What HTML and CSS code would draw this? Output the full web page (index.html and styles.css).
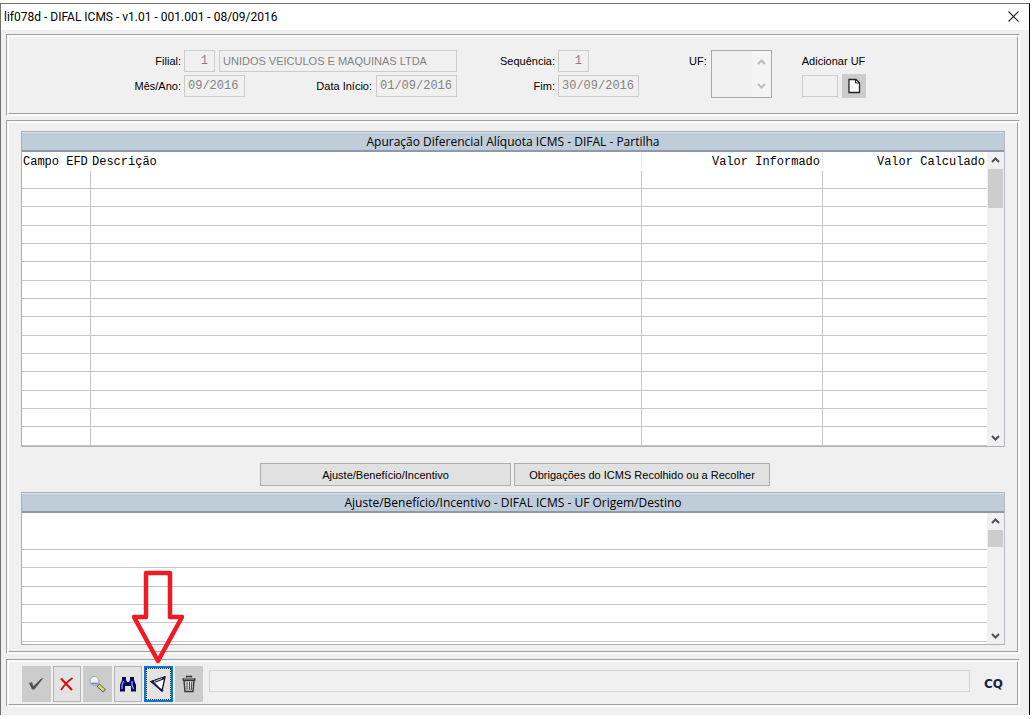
FILE: index.html
```html
<!DOCTYPE html>
<html lang="pt-BR">
<head>
<meta charset="utf-8">
<title>lif078d - DIFAL ICMS</title>
<link rel="stylesheet" href="styles.css">
</head>
<body>
<main class="window">
  <header class="titlebar">
    <h1>lif078d - DIFAL ICMS - v1.01 - 001.001 - 08/09/2016</h1>
    <button class="close" aria-label="Fechar"><svg width="11" height="11" viewBox="0 0 11 11"><path d="M.5.5l10 10M10.5.5l-10 10" stroke="#222" stroke-width="1.1"/></svg></button>
  </header>

  <section class="panel"><div class="inner filters">
    <div class="fields">
      <label for="filial">Filial:</label>
      <div class="pair"><input id="filial" class="code" value="1" disabled><input class="name" aria-label="Nome da filial" value="UNIDOS VEICULOS E MAQUINAS LTDA" disabled></div>
      <label for="seq">Sequência:</label>
      <input id="seq" class="code" value="1" disabled>
      <label for="mes">Mês/Ano:</label>
      <div class="pair spread"><input id="mes" class="month" value="09/2016" disabled><span class="pair"><label for="ini">Data Início:</label><input id="ini" class="date" value="01/09/2016" disabled></span></div>
      <label for="fim">Fim:</label>
      <input id="fim" class="date" value="30/09/2016" disabled>
    </div>
    <div class="uf">
      <label for="uf">UF:</label>
      <div class="listbox">
        <select id="uf" size="2" disabled></select>
        <div class="arrows"><svg width="9" height="6" viewBox="0 0 9 6"><path d="M1 5l3.500-3.500L8 5"/></svg><svg width="9" height="6" viewBox="0 0 9 6"><path d="M1 1l3.500 3.500L8 1"/></svg></div>
      </div>
    </div>
    <div class="add">
      <label for="adduf">Adicionar UF</label>
      <div class="pair"><input id="adduf" class="short" disabled><button class="new" aria-label="Novo"><svg width="14" height="16" viewBox="0 0 14 16"><path d="M2 1.500h7l3.500 3.500v9.500H2z" fill="#fff" stroke="#222" stroke-width="1.300"/><path d="M8.500 1.500V5h4" fill="none" stroke="#222"/></svg></button></div>
    </div>
  </div></section>

  <section class="panel"><div class="inner work">
    <div class="grid">
      <h2>Apuração Diferencial Alíquota ICMS - DIFAL - Partilha</h2>
      <div class="gridbody">
        <table class="main">
          <colgroup><col class="c1"><col><col class="c3"><col class="c4"></colgroup>
          <thead><tr><th>Campo EFD</th><th>Descrição</th><th class="num">Valor Informado</th><th class="num">Valor Calculado</th></tr></thead>
          <tbody>
            <tr><td></td><td></td><td></td><td></td></tr><tr><td></td><td></td><td></td><td></td></tr><tr><td></td><td></td><td></td><td></td></tr>
            <tr><td></td><td></td><td></td><td></td></tr><tr><td></td><td></td><td></td><td></td></tr><tr><td></td><td></td><td></td><td></td></tr>
            <tr><td></td><td></td><td></td><td></td></tr><tr><td></td><td></td><td></td><td></td></tr><tr><td></td><td></td><td></td><td></td></tr>
            <tr><td></td><td></td><td></td><td></td></tr><tr><td></td><td></td><td></td><td></td></tr><tr><td></td><td></td><td></td><td></td></tr>
            <tr><td></td><td></td><td></td><td></td></tr><tr><td></td><td></td><td></td><td></td></tr><tr><td></td><td></td><td></td><td></td></tr>
          </tbody>
        </table>
        <div class="scroll"><svg width="9" height="6" viewBox="0 0 9 6"><path d="M1 5l3.500-3.500L8 5"/></svg><i class="thumb"></i><svg width="9" height="6" viewBox="0 0 9 6"><path d="M1 1l3.500 3.500L8 1"/></svg></div>
      </div>
    </div>
    <div class="tabs"><button class="tab">Ajuste/Benefício/Incentivo</button><button class="tab wide">Obrigações do ICMS Recolhido ou a Recolher</button></div>
    <div class="grid">
      <h2>Ajuste/Benefício/Incentivo - DIFAL ICMS - UF Origem/Destino</h2>
      <div class="gridbody">
        <div class="subwrap"><table class="sub"><tbody><tr><td></td></tr><tr><td></td></tr><tr><td></td></tr><tr><td></td></tr><tr><td></td></tr><tr><td></td></tr></tbody></table></div>
        <div class="scroll"><svg width="9" height="6" viewBox="0 0 9 6"><path d="M1 5l3.500-3.500L8 5"/></svg><i class="thumb small"></i><svg width="9" height="6" viewBox="0 0 9 6"><path d="M1 1l3.500 3.500L8 1"/></svg></div>
      </div>
    </div>
  </div></section>

  <section class="panel last"><div class="inner bar">
    <div class="tools">
      <button class="tool off" aria-label="Confirmar"><svg width="18" height="18" viewBox="0 0 18 18"><path d="M2 8l3-1 1.500 4L14 4l2.500-1L7.500 14.500H5z" fill="#606060"/><path d="M3 8.500l3 5 9-10" stroke="#444"/></svg></button>
      <button class="tool" aria-label="Cancelar"><svg width="18" height="18" viewBox="0 0 18 18"><path d="M3 3.500l11 11.500" stroke="#d91010" stroke-width="2.200"/><path d="M14.500 3C10 6 6 10.500 3 15" fill="none" stroke="#d91010" stroke-width="1.800"/></svg></button>
      <button class="tool off" aria-label="Pesquisar"><svg width="18" height="18" viewBox="0 0 18 18"><path d="M10 10l6.500 6" stroke="#555" stroke-width="4"/><path d="M10.500 10.500l5.500 5" stroke="#e0dc60" stroke-width="2.500"/><circle cx="6.500" cy="6" r="4.500" fill="#e8eef4" stroke="#999"/><path d="M3.500 5.500q1.500-3 5-2" stroke="#fff" stroke-width="2"/><path d="M3.500 8.500h6" stroke="#6080b0" stroke-width="1.500"/></svg></button>
      <button class="tool" aria-label="Localizar"><svg width="18" height="18" viewBox="0 0 18 18"><path d="M3 2.500h4V5l1 2h2l1-2V2.500h4V5l2 5v6h-5v-5H6v5H1v-6l2-5z" fill="#05056f"/><path d="M4.500 6L3 10v4M13 6v4l1.500 4" stroke="#c9cae8"/><path d="M3 2.500h4M11 2.500h4M1 16h5M12 16h5M7 8h4" stroke="#111"/></svg></button>
      <span class="slot">
        <button class="tool focus" aria-label="Filtrar"><svg width="18" height="18" viewBox="0 0 18 18"><path d="M2 6.500L16 2 13 16z" fill="#fff" stroke="#111" stroke-width="1.300"/><path d="M2.500 6.500L6 8l6 6 1 2z" fill="#0a0ab0"/><path d="M1 6.500L16 1v3L6.500 7.500 3 8z" fill="#182038"/><path d="M5 6.500l8-3" stroke="#bcc8d8"/><path d="M11 14l3 2" stroke="#0a0a70" stroke-width="2"/></svg></button>
        <svg class="pointer" width="52" height="96" viewBox="0 0 52 96"><path d="M14 3h24v44h12L26 91 2 47h12z" fill="none" stroke="#ed1c24" stroke-width="4.500" stroke-linejoin="round"/></svg>
      </span>
      <button class="tool off" aria-label="Excluir"><svg width="18" height="18" viewBox="0 0 18 18"><path d="M4 5.500h10l-1 11H5z" fill="#ddd" stroke="#333" stroke-width="1.400"/><path d="M7 7v8M9.500 7v8M11.800 7l-.5 8" stroke="#444"/><path d="M2.500 4.500h13" stroke="#333" stroke-width="2.500"/><path d="M4 4h10" stroke="#aaa"/><path d="M6.500 2.500V1.500h5v1" stroke="#333" stroke-width="1.300"/></svg></button>
    </div>
    <input class="status" aria-label="Mensagem" disabled>
    <span class="logo">CQ</span>
  </div></section>
</main>
</body>
</html>
```
FILE: styles.css
```css
* { box-sizing: border-box; }
body {
  margin: 0;
  padding: 3px 2px 3px 0;
  background: #fff;
  color: #000;
  font: 11px/16px "Liberation Sans", Arial, sans-serif;
}
h1, h2 { margin: 0; font-weight: 400; }
svg { display: block; flex: none; }
button, input, select { margin: 0; border-radius: 0; font: inherit; color: inherit; }
button { padding: 0; display: flex; align-items: center; justify-content: center; }
.window {
  background: #f0f0f0;
  border: solid #707070;
  border-width: 1px 1px 0 1px;
  border-right-color: #000;
  padding-bottom: 8px;
}
.titlebar {
  height: 26px;
  background: #fff;
  display: flex;
  justify-content: space-between;
  align-items: center;
  padding: 0 10px 1px 3px;
}
h1 { font: 12px/16px Roboto, sans-serif; }
.close { border: 0; background: none; width: 12px; height: 16px; }

.panel {
  margin: 4px 9px 0 5px;
  border: 1px solid;
  border-color: #a0a0a0 #fff #fff #a0a0a0;
  padding: 1px;
}
.inner {
  border: 1px solid;
  border-color: #fff #a0a0a0 #a0a0a0 #fff;
  box-shadow: 0 0 0 1px #f8f8f8;
}

.filters { display: flex; align-items: flex-start; padding: 13px 20px 15px 120px; }
.fields {
  display: grid;
  grid-template-columns: 52px 273px 95px 82px;
  gap: 3px;
  align-items: center;
}
.fields label { text-align: right; }
.pair { display: flex; align-items: center; gap: 4px; }
.spread { justify-content: space-between; }
label { white-space: nowrap; }
input {
  height: 22px;
  padding: 0 3px;
  border: 1px solid #ccc;
  background: #f0f0f0;
  color: #838383;
  font: 12px/16px "Liberation Mono", monospace;
}
.code { width: 31px; text-align: right; padding-right: 6px; }
.name { flex: 1; min-width: 0; font: 11px/16px "Liberation Sans", Arial, sans-serif; }
.month { width: 61px; }
.date { width: 81px; }
.short { width: 36px; }
.uf { display: flex; gap: 4px; margin-left: 49px; }
.uf label, .add label { line-height: 22px; }
.listbox { width: 61px; height: 48px; border: 1px solid #a5a8ad; display: flex; }
.listbox select { flex: 1; min-width: 0; height: 100%; border: 0; background: #f0f0f0; overflow: hidden; }
.arrows { width: 19px; padding: 8px 5px; background: #f4f4f4; display: flex; flex-direction: column; justify-content: space-between; }
.arrows path { fill: none; stroke: #bbb; stroke-width: 2; }
.add { display: flex; flex-direction: column; gap: 2px; margin-left: 30px; }
.new { width: 24px; height: 24px; border: 0; background: #ccc; }

.work { padding: 8px 12px 6px; }
.grid { border: 1px solid #a9b0b8; border-right-color: #b8bcc2; }
h2 {
  height: 20px;
  background: #bfccda;
  border-top: 1px solid #dce4ec;
  border-bottom: 2px solid #8e99a5;
  font: 12px/17px "Open Sans", sans-serif;
  text-align: center;
}
.gridbody { display: flex; background: #fff; }
table { flex: 1; table-layout: fixed; border-collapse: separate; border-spacing: 0; width: 100%; }
.c1 { width: 69px; }
.c3 { width: 181px; }
.c4 { width: 164px; }
th { padding: 0 2px 0 1px; height: 19px; font: 12px/18px "Liberation Mono", monospace; text-align: left; border-right: 1px solid #ececec; }
th.num { text-align: right; }
td { padding: 0; height: 18px; border: solid #c6c6c6; border-width: 0 1px 1px 0; }
th:last-child, td:last-child { border-right: 0; }
.main tr:nth-child(3n) td { height: 19px; }
.subwrap { flex: 1; padding-bottom: 2px; }
.sub tr:first-child td { height: 37px; }
.sub tr:nth-child(3n) td { height: 19px; }
.scroll { width: 17px; background: #f0f0f0; display: flex; flex-direction: column; align-items: center; padding: 5px 1px; }
.scroll path { fill: none; stroke: #505050; stroke-width: 2; }
.thumb { width: 15px; height: 39px; margin: 6px 0 auto; background: #cdcdcd; }
.thumb.small { height: 17px; }
.tabs { display: flex; justify-content: center; gap: 3px; padding: 16px 0 6px 4px; }
.tab { height: 23px; width: 251px; border: 1px solid #adadad; background: #e1e1e1; }
.wide { width: 256px; }

.last { margin-top: 5px; }
.bar { display: flex; align-items: center; padding: 4px 14px 2px 13px; }
.tools { display: grid; grid-template-columns: repeat(6, 1fr); gap: 2px; width: 181px; }
.tool { width: 100%; height: 36px; border: 1px solid #b4b4b4; background: #e3e3e3; }
.tool svg { fill: none; }
.off { background: #ccc; border-color: #ccc; }
.focus { border: 2px solid #0078d7; outline: 1px dotted #222; outline-offset: -3px; }
.slot { position: relative; }
.pointer { position: absolute; left: 50%; bottom: 100%; margin-left: -26px; }
.status { flex: 1; min-width: 0; margin: 0 14px 6px 6px; border-color: #d4d4d4; }
.logo { font: bold 12px/16px "DejaVu Sans", sans-serif; color: #1c2340; }
```
